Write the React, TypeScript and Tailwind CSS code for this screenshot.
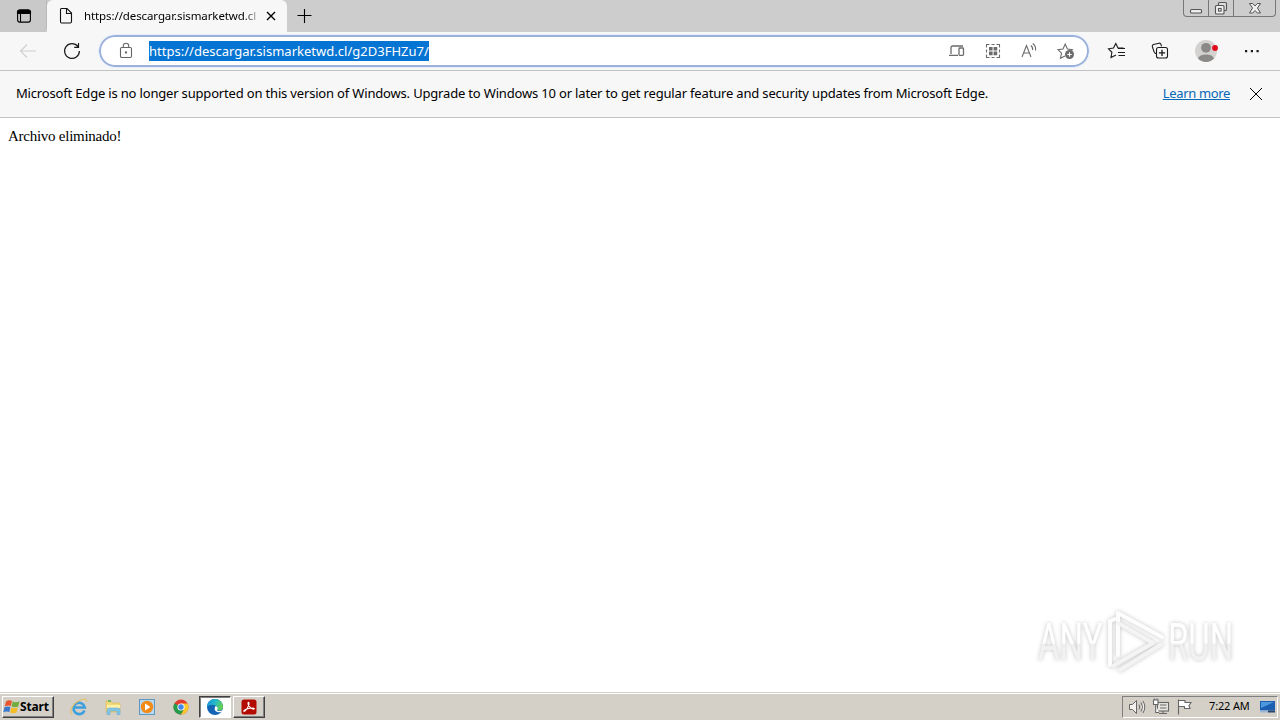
import type { ReactNode } from 'react'

type IconProps = { children: ReactNode; w?: number; h?: number; className?: string }

// small stroked glyph, drawn 1:1 in pixels
function Glyph({ children, w = 18, h = 18, className = '' }: IconProps) {
  return (
    <svg
      width={w}
      height={h}
      viewBox={`0 0 ${w} ${h}`}
      fill="none"
      stroke="currentColor"
      strokeWidth="1.1"
      className={`shrink-0 ${className}`}>
      {children}
    </svg>
  )
}

function TabStrip() {
  return (
    <header className="flex bg-[#cdcdcd] h-8 shrink-0">
      <div className="flex justify-center items-center bg-[#c9c9c9] pl-[2px] border-[#b8b8b8] border-r rounded-br-md w-[47px] h-8 shrink-0">
        <Glyph w={16} h={16} className="text-black">
          <rect x="1.6" y="2.1" width="12.8" height="12" rx="2" strokeWidth="1.1" />
          <path d="M1.5 3.5Q2 2 4 2h8q2 0 2.500 1.500V5.500h-13z" fill="currentColor" />
          <path d="M4.500 5v9" />
        </Glyph>
      </div>

      <div className="flex items-center bg-[#f7f7f7] pl-[11px] rounded-t-md w-[240px] h-8">
        <Glyph w={16} h={18} className="text-[#111]">
          <path d="M3.500 1.500h5.500l4.500 4.500v8.500q0 1.500-1.500 1.500h-8.500q-1 0-1-1.500v-12q0-1 1-1z M8.500 1.500v5h5" />
        </Glyph>
        <div className="ml-[10px] w-[174px] text-[11.5px] text-black whitespace-nowrap tracking-[-0.1px] [mask-image:linear-gradient(to_right,black_160px,transparent_178px)]">
          https://descargar.sismarketwd.cl
        </div>
        <Glyph w={12} h={12} className="ml-[7px] text-black">
          <path d="M2 2l8 8M10 2l-8 8" strokeWidth="1.4" />
        </Glyph>
      </div>

      <div className="flex flex-1 items-center pl-[9px]">
        <Glyph w={18} h={18} className="text-black">
          <path d="M8.500 2v14M1.500 8.500h14" />
        </Glyph>
      </div>

      <div className="flex mr-[4px] border border-[#777] border-t-0 rounded-b w-[93px] h-[17px] text-[#555]">
        <div className="flex justify-center items-center border-[#777] border-r w-[25px]">
          <Glyph w={14} h={14}>
            <rect x="1.500" y="8.500" width="11" height="3.500" rx="1" fill="#eee" />
          </Glyph>
        </div>
        <div className="flex justify-center items-center border-[#777] border-r w-[25px]">
          <Glyph w={14} h={14}>
            <rect x="4.500" y="1.500" width="8" height="8" rx="1" fill="#ddd" />
            <rect x="1.500" y="4.500" width="8.500" height="8.500" rx="1" fill="#eee" />
            <rect x="4.500" y="7.500" width="2.600" height="2.600" />
          </Glyph>
        </div>
        <div className="flex flex-1 justify-center items-center">
          <Glyph w={14} h={14}>
            <path d="M1.500 2.500h3.200L7 5l2.300-2.500h3.200L9.500 7l3 5H9.300L7 9.500 4.700 12H1.500l3-5z" fill="#eee" strokeWidth="1" />
          </Glyph>
        </div>
      </div>
    </header>
  )
}

function AddressBar() {
  return (
    <div className="flex items-center bg-white border-[#9bb1dc] border-2 rounded-full outline outline-[#e6effb] w-[990px] h-8 shrink-0">
      <Glyph w={16} h={18} className="ml-[17px] text-[#666]">
        <rect x="2.500" y="5.500" width="11" height="10" rx="1.200" />
        <path d="M5.300 5.500V4a2.700 2.700 0 0 1 5.400 0v1.500" />
        <circle cx="8" cy="10.500" r="0.600" fill="currentColor" />
      </Glyph>
      <span className="bg-[#0574d2] ml-[15px] w-[280px] h-5 text-[13px] text-white leading-5 whitespace-nowrap tracking-[0.01px]">
        https://descargar.sismarketwd.cl/g2D3FHZu7/
      </span>

      <div className="flex items-center gap-[18px] mr-[11px] ml-auto text-[#6b6b6b]">
        <Glyph>
          <path d="M3 12V5.500q0-1.500 1.500-1.500H15M1 13.300h9" strokeWidth="1.300" />
          <rect x="11" y="6" width="4.500" height="7.300" rx="0.800" strokeWidth="1.300" />
        </Glyph>
        <Glyph>
          <path d="M2.500 5.500v-3h3M12.500 2.500h3v3M15.500 12.500v3h-3M5.500 15.500h-3v-3M7.500 2.500h3M7.500 15.500h3M2.500 7.500v3M15.500 7.500v3" />
          <path d="M5 5h3.600v3.600H5zM9.600 5h3.600v3.600H9.600zM5 9.600h3.600v3.600H5zM9.600 9.600h3.600v3.600H9.600z" fill="currentColor" stroke="none" />
        </Glyph>
        <Glyph>
          <path d="M2 15L6.500 3.500 11 15M3.500 11h6M10.800 3.500q2.200 1.500 1.800 4.500M12.700 1.500q3.500 2.500 2.800 7" />
        </Glyph>
        <Glyph w={20} h={20}>
          <path d="M9 15l-4.500 2.200 1-5L2 8.700l5-.7 2.200-5 2.200 5 5 .7-1.500 1.500" />
          <circle cx="13.500" cy="13.500" r="4.500" fill="currentColor" stroke="none" />
          <path d="M13.500 11.300v4.400M11.300 13.500h4.400" stroke="white" />
        </Glyph>
      </div>
    </div>
  )
}

function Toolbar() {
  return (
    <nav className="flex items-center bg-[#f7f7f7] border-[#c2c2c2] border-b h-[39px] text-[#1b1b1b] shrink-0">
      <Glyph w={18} h={18} className="ml-[19px] text-[#cfcfcf]">
        <path d="M1.500 9H17M8 2.500L1.500 9 8 15.500" />
      </Glyph>
      <Glyph w={20} h={20} className="ml-[25px] mr-[17px]">
        <path d="M16 5.700A7.400 7.400 0 1 0 17.400 10M16.500 2v4.300h-4.300" strokeWidth="1.200" />
      </Glyph>
      <AddressBar />
      <Glyph w={20} h={20} className="ml-[18px]">
        <path d="M9 14l-5 2.500.9-5.200L1.500 7.800l5-.8L8.800 2.500 11 7h5.500M11 7.500h7M11 11.500h7M11.500 14.500H18" />
      </Glyph>
      <Glyph w={20} h={20} className="ml-[23px]">
        <path d="M6 12.700q-1.500-.3-2-2L2.300 5.500q-.3-1.500 1.200-2L9 2.200q1.500-.2 2 1.200l.5 2" />
        <rect x="6.500" y="6.500" width="11" height="10.500" rx="2" />
        <path d="M12 8.800v6.200M8.900 11.900h6.200" strokeWidth="1.300" />
      </Glyph>
      <svg width="24" height="24" viewBox="0 0 24 24" className="ml-[24px] shrink-0">
        <circle cx="12" cy="12" r="11" fill="#d4d2d0" />
        <circle cx="12" cy="8.800" r="4.900" fill="#8b8988" />
        <path d="M4 19.500q1.500-4 8-4t8 4a11 11 0 0 1-16 0z" fill="#8b8988" />
        <circle cx="21" cy="9" r="3.300" fill="#e9dcdc" />
        <circle cx="21" cy="9" r="2.900" fill="#e00b1c" />
      </svg>
      <Glyph w={18} h={18} className="ml-[25px]">
        <path d="M2 8h2.200v2.200H2zM7.800 8H10v2.200H7.800zM13.500 8h2.200v2.200h-2.200z" fill="currentColor" stroke="none" />
      </Glyph>
    </nav>
  )
}

function SupportNotice() {
  return (
    <div className="flex items-center bg-[#f7f7f7] pr-[17px] pl-4 border-[#c2c2c2] border-b h-[47px] text-[13px] text-black whitespace-nowrap shrink-0">
      <p className="tracking-[-0.174px]">
        Microsoft Edge is no longer supported on this version of Windows. Upgrade to Windows 10 or later to get regular feature and security updates from Microsoft Edge.
      </p>
      <a className="ml-auto text-[#0568b8] underline tracking-[-0.35px]">Learn more</a>
      <Glyph w={14} h={14} className="ml-[19px]">
        <path d="M1 1l12 12M13 1L1 13" strokeWidth="1" />
      </Glyph>
    </div>
  )
}

function Watermark() {
  return (
    <svg
      width="220"
      height="76"
      viewBox="0 0 220 76"
      className="right-[30px] bottom-[12px] absolute [filter:drop-shadow(0_0_2px_#c4c4c4)]">
      <defs>
        <linearGradient id="fade" x1="0" y1="0" x2="0" y2="1">
          <stop offset="0.5" stopColor="#ffffff" />
          <stop offset="0.53" stopColor="#f0f0f0" />
          <stop offset="1" stopColor="#f4f4f4" />
        </linearGradient>
      </defs>
      <g fill="url(#fade)" fontFamily="Roboto" fontSize="52">
        <text transform="translate(8 56) scale(0.635 1)">ANY</text>
        <text transform="translate(138 56) scale(0.635 1)">RUN</text>
      </g>
      <g fill="none" stroke="#fdfdfd" strokeWidth="4" strokeLinejoin="round" strokeLinecap="round">
        <path d="M88 51V9l44 24" />
        <path d="M88 19l35 20-35 20" stroke="#f4f4f4" />
        <path d="M80 61V17l5-2" />
        <path d="M83 62l5-3M90 66l42-26" stroke="#f3f3f3" />
      </g>
    </svg>
  )
}

function PinnedIcons() {
  return (
    <div className="flex items-center gap-[14px] ml-[15px]">
      {/* internet explorer */}
      <svg width="20" height="20" viewBox="0 0 20 20">
        <path d="M15.500 13.500A5.700 5.700 0 1 1 15.800 10.500H5" fill="none" stroke="#3d9fdc" strokeWidth="2.600" />
        <path d="M3 17.500C-1 14 5 5 13 2.500q5-1.500 4.800 2" fill="none" stroke="#e4c069" strokeWidth="1.100" />
      </svg>
      {/* explorer */}
      <svg width="20" height="20" viewBox="0 0 20 20">
        <path d="M3 4h5l1 2h8v9H3z" fill="#f2d978" stroke="#d7b555" strokeWidth="0.600" />
        <path d="M5 3h3v2H5z" fill="#73b66b" />
        <path d="M4 8h13v3H4z" fill="#fff0a7" />
        <path d="M4 17.500v-4q0-2.500 2-2.500h9q2 0 2 2.500v4h-3V14H7v3.500z" fill="#83c5e7" stroke="#5ba4ce" strokeWidth="0.500" />
      </svg>
      {/* media player */}
      <svg width="20" height="20" viewBox="0 0 20 20">
        <rect x="2.500" y="2.500" width="15" height="15" fill="#b9d8ef" stroke="#5b9ac6" />
        <circle cx="10" cy="10" r="6.200" fill="#f28a18" />
        <path d="M8 6.500l5.500 3.500L8 13.500z" fill="white" />
      </svg>
      {/* chrome */}
      <svg width="20" height="20" viewBox="0 0 20 20">
        <circle cx="10" cy="10" r="7.500" fill="#e33b2e" />
        <path d="M10 10L3.500 6.200A7.500 7.500 0 0 0 10 17.500l3.200-5.600z" fill="#259b4b" />
        <path d="M10 10h-.1L10 6.500h6.600A7.500 7.500 0 0 1 10 17.500l3.200-5.600z" fill="#f9ca2b" />
        <circle cx="10" cy="10" r="3.600" fill="white" />
        <circle cx="10" cy="10" r="2.700" fill="#4285e8" />
      </svg>
    </div>
  )
}

function Taskbar() {
  return (
    <footer className="flex items-center bg-[#d4d0c8] pb-px pl-[2px] border-white border-t h-[27px] text-black shrink-0">
      <button className="flex items-center bg-[#d4d0c8] border border-t-white border-r-[#404040] border-b-[#404040] border-l-white w-[52px] h-[22px] font-bold text-[12px] shadow-[inset_-1px_-1px_#808080]">
        <svg width="17" height="18" viewBox="0 0 17 18">
          <path d="M3 3.500q3-2 6-.5L7.800 8Q5 7 1.800 8.500z" fill="#e9562b" />
          <path d="M9.700 3.500q3 1.500 6.800 0l-1.300 5q-3.200 1.500-6.600 0z" fill="#70ad3d" />
          <path d="M1.500 9.300q3-1.500 6-.3L6.300 14q-3-1.200-6 .3z" fill="#3d79cb" />
          <path d="M8.300 9.500q3 1.500 6.500 0L13.500 14.500q-3.200 1.500-6.400 0z" fill="#f4bd25" />
        </svg>
        <span className="tracking-[-0.15px]">Start</span>
      </button>

      <PinnedIcons />

      {/* running windows */}
      <div className="flex justify-center items-center bg-white ml-[8px] border border-t-[#404040] border-r-white border-b-white border-l-[#404040] w-8 h-[22px] shadow-[inset_1px_1px_#808080]">
        <svg width="18" height="18" viewBox="0 0 18 18">
          <defs>
            <linearGradient id="edge" x1="0" y1="0" x2="1" y2="0.3">
              <stop offset="0" stopColor="#168edb" />
              <stop offset="0.55" stopColor="#25b9c9" />
              <stop offset="1" stopColor="#62cf58" />
            </linearGradient>
          </defs>
          <circle cx="9" cy="9" r="8" fill="#1464b5" />
          <path d="M1 9a8 8 0 0 1 16 0c0 3-3 4-6 3-1-.4.500-1 .2-2.500C10.500 6.500 4 5.500 1 9z" fill="url(#edge)" />
          <path d="M9.500 8q-2.500 4.500 1.800 6 3 .8 4.700-.5L18 11q-3 3-6.500 1.700-1-.5 0-1.700.7-2-2-3z" fill="white" />
        </svg>
      </div>
      <div className="flex justify-center items-center ml-[2px] border border-t-white border-r-[#404040] border-b-[#404040] border-l-white w-8 h-[22px] shadow-[inset_-1px_-1px_#808080]">
        <svg width="16" height="16" viewBox="0 0 16 16">
          <rect x="0.500" y="0.500" width="15" height="15" rx="2.500" fill="#b30b00" />
          <path d="M3 12.500C5 12 8.500 6.500 8 4q-.5-1.500-1 0c-.3 2.500 3 6 5.500 6.200 1.500-.2.800-1.300-1-1.200C8.500 9 4 10.200 3 11.500z" fill="none" stroke="white" strokeWidth="1.100" />
        </svg>
      </div>

      {/* tray */}
      <div className="flex items-center mr-[2px] ml-auto pl-[5px] border border-t-[#808080] border-r-white border-b-white border-l-[#808080] w-[156px] h-[22px] text-[#666] shrink-0">
        <Glyph>
          <path d="M1.500 6.500h3l4-4v13l-4-4h-3zM11 6.500q1.500 2.500 0 5M13 4.500q3 4.500 0 9M15 3q3.500 6 0 12" fill="#f3f1ed" strokeWidth="1" />
        </Glyph>
        <Glyph className="ml-[6px]">
          <rect x="5.500" y="4.500" width="11" height="8.500" fill="#e9e7e2" />
          <path d="M7 15.500h8M11 13v2.500M8 7h6.500M8 10h6.500" />
          <path d="M1.500 2v4.500h4.500V2zM2.500 2V.5M5 2V.5M3.700 6.500v8H7" fill="#fff" />
        </Glyph>
        <Glyph className="ml-[6px]">
          <path d="M2.500 1.500v15M2.500 2.500h6.500v2h6l-2 3 1 3H8.500v-2h-6" fill="#fff" />
        </Glyph>
        <span className="ml-[15px] w-[43px] text-[11px] text-black whitespace-nowrap tracking-[-0.15px]">
          7:22 AM
        </span>
        <svg width="17" height="16" viewBox="0 0 17 16" className="ml-[7px] shrink-0">
          <path d="M1 2h15v9.500H1z" fill="#1c5fb2" />
          <path d="M2 3h13L2 9z" fill="#4d97dc" />
          <path d="M1 11.500h8v2H1z" fill="#9db8d6" />
          <path d="M9 11.500h7v2H9z" fill="#26446c" />
        </svg>
      </div>
    </footer>
  )
}

export default function App() {
  return (
    <div className="flex flex-col bg-white w-[1280px] h-[720px] overflow-hidden font-['Noto_Sans',sans-serif]">
      <TabStrip />
      <Toolbar />
      <SupportNotice />
      <main className="relative flex-1 px-2 pt-[9px] border-[#d4d0c8] border-b font-['Liberation_Serif',serif] text-[15px] text-black leading-[18px]">
        <p className="tracking-[-0.26px]">Archivo eliminado!</p>
        <Watermark />
      </main>
      <Taskbar />
    </div>
  )
}
